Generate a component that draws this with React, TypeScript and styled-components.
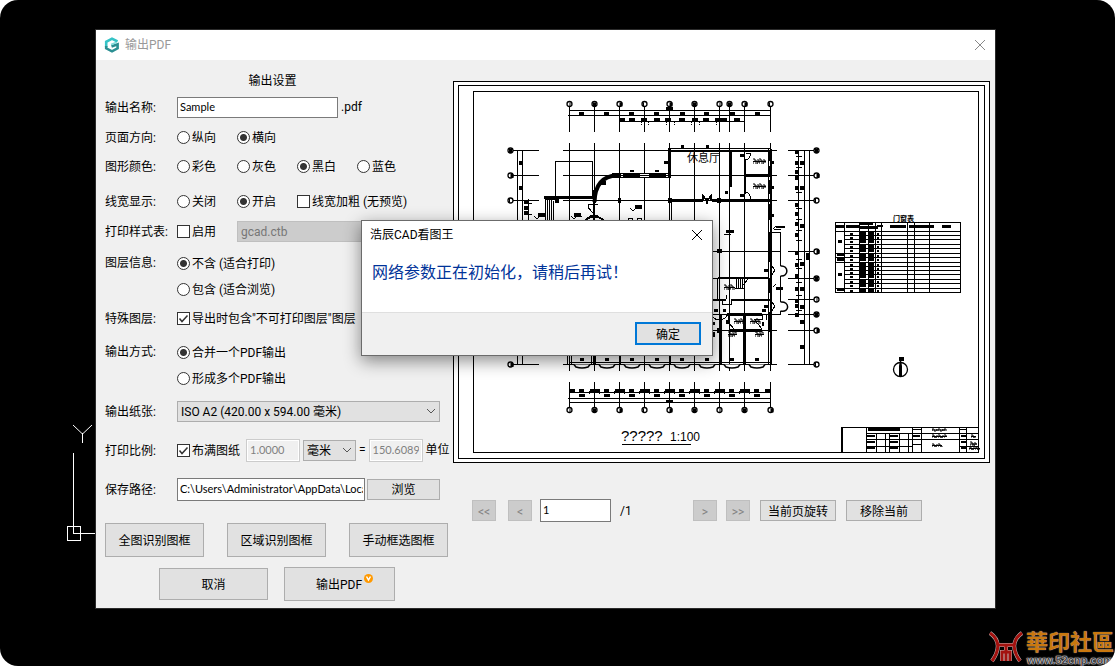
import React from "react";
import styled, { createGlobalStyle, css } from "styled-components";

const GlobalStyle = createGlobalStyle`
  * { box-sizing: border-box; }
  body {
    margin: 0;
    background: #fff;
    color: #000;
    font: 12px/16px Roboto, "Noto Sans CJK SC", sans-serif;
  }
  button, input, select { font: inherit; color: inherit; margin: 0; }
`;

const Canvas = styled.main`
  position: relative;
  min-height: 100vh;
  padding: 30px 120px 58px 96px;
  background: #000;
  border-radius: 18px;
  overflow: hidden;
`;

const UcsIcon = styled.svg`
  position: absolute;
  left: 66px;
  top: 422px;
`;

const Window = styled.section`
  position: relative;
  background: #f0f0f0;
  outline: 1px solid #2b2b2b;
`;

const TitleBar = styled.header`
  display: flex;
  align-items: center;
  gap: 5px;
  height: 30px;
  padding: 0 9px 0 8px;
  background: #fff;
  color: #999;
`;

const TitleText = styled.h1`
  flex: 1;
  margin: 0;
  font-size: 12px;
  font-weight: 400;
`;

const CloseButton = styled.button`
  display: flex;
  padding: 0;
  border: 0;
  background: none;
`;

const Body = styled.div`
  display: flex;
  align-items: flex-start;
`;

const Settings = styled.form`
  flex: none;
  width: 357px;
  padding: 8px 0 7px 9px;
`;

const SettingsTitle = styled.h2`
  margin: 0;
  height: 24px;
  line-height: 26px;
  font-size: 12px;
  font-weight: 400;
  text-align: center;
  padding-right: 13px;
`;

const Row = styled.div<{ $h: number; $top?: number }>`
  display: flex;
  align-items: center;
  min-height: ${(p) => p.$h}px;
  margin-top: ${(p) => p.$top ?? 0}px;
`;

const RowLabel = styled.span`
  flex: none;
  width: 72px;
  padding-top: 2px;
  white-space: nowrap;
`;

const Stack = styled.div`
  display: flex;
  flex-direction: column;
`;

const StackedRow = styled(Row)`
  align-items: flex-start;
  > ${RowLabel} { line-height: 26px; padding-top: 0; }
`;

const Choice = styled.label<{ $w?: number; $h?: number }>`
  display: flex;
  align-items: center;
  gap: 2px;
  line-height: 18px;
  white-space: nowrap;
  ${(p) => p.$w && css`width: ${p.$w}px;`}
  ${(p) => p.$h && css`height: ${p.$h}px;`}
`;

const ChoiceText = styled.span`
  padding-top: 1px;
`;

const Radio = styled.input.attrs({ type: "radio" })`
  appearance: none;
  flex: none;
  width: 13px;
  height: 13px;
  border: 1px solid #333;
  border-radius: 50%;
  background: #fff;
  &:checked { background: radial-gradient(circle, #333 0 3px, #fff 4px); }
`;

const CheckBox = styled.input.attrs({ type: "checkbox" })`
  appearance: none;
  width: 13px;
  height: 13px;
  border: 1px solid #333;
  background: #fff;
`;

const CheckWrap = styled.span`
  display: grid;
  width: 13px;
  height: 13px;
  > * { grid-area: 1 / 1; }
  > svg { pointer-events: none; z-index: 1; }
`;

const Field = styled.input<{ $w: number; $h?: number }>`
  width: ${(p) => p.$w}px;
  height: ${(p) => p.$h ?? 23}px;
  padding: 0 1px 2px 2px;
  border: 1px solid #7a7a7a;
  background: #fff;
  font-family: Lato, sans-serif;
  font-size: 11px;
  outline: 0;
  &:disabled {
    padding: 0 3px 2px;
    border-color: #ccc;
    box-shadow: inset 0 0 0 1px #fff;
    background: #f0f0f0;
    color: #808080;
  }
`;

const SelectWrap = styled.span<{ $w: number }>`
  display: grid;
  align-items: center;
  width: ${(p) => p.$w}px;
  > * { grid-area: 1 / 1; }
  > svg { justify-self: end; margin-right: 4px; pointer-events: none; }
`;

const Select = styled.select`
  appearance: none;
  width: 100%;
  height: 21px;
  padding: 1px 3px 0;
  border: 1px solid #adadad;
  border-radius: 0;
  background: #e1e1e1;
  &:disabled { background: #ccc; border-color: #bfbfbf; color: #777; opacity: 1; }
`;

const Button = styled.button<{ $w: number; $h?: number }>`
  display: flex;
  align-items: center;
  justify-content: center;
  width: ${(p) => p.$w}px;
  height: ${(p) => p.$h ?? 21}px;
  padding: 2px 0 0;
  border: 1px solid #adadad;
  background: #e1e1e1;
  white-space: nowrap;
  &:disabled { background: #ccc; border-color: #bfbfbf; color: #838383; }
`;

const DefaultButton = styled(Button)`
  border: 2px solid #0078d7;
`;

const FrameButtons = styled.div`
  display: flex;
  justify-content: space-between;
  margin-top: 14px;
  padding-right: 5px;
`;

const Actions = styled.div`
  display: flex;
  align-items: center;
  gap: 16px;
  margin-top: 10px;
  padding-left: 54px;
`;

const ExportButton = styled(Button)`
  padding-left: 10px;
`;

const VipBadge = styled.svg`
  align-self: flex-start;
  margin: 4px 0 0 2px;
`;

const Preview = styled.section`
  flex: 1;
  min-width: 0;
  padding: 21px 5px 0 0;
`;

const Drawing = styled.svg`
  display: block;
  width: 100%;
  height: auto;
`;

const Pager = styled.nav`
  display: flex;
  align-items: center;
  margin-top: 36px;
  padding-left: 19px;
`;

const PagerGroup = styled.div<{ $gap: number; $left?: number }>`
  display: flex;
  align-items: center;
  gap: ${(p) => p.$gap}px;
  margin-left: ${(p) => p.$left ?? 0}px;
`;

const PageTotal = styled.span`
  width: 73px;
`;

const Dialog = styled.section`
  position: absolute;
  left: 265px;
  top: 190px;
  width: 352px;
  border: 1px solid #6b6b6b;
  background: #fff;
  box-shadow: 0 5px 16px rgba(0, 0, 0, 0.45);
`;

const DialogTitle = styled.header`
  display: flex;
  align-items: center;
  justify-content: space-between;
  height: 28px;
  padding: 0 9px 0 8px;
`;

const Message = styled.p`
  margin: 0;
  height: 63px;
  padding: 12px 10px 0;
  color: #039;
  font-size: 16px;
  line-height: 24px;
`;

const DialogFooter = styled.footer`
  display: flex;
  justify-content: flex-end;
  padding: 9px 11px 10px;
  border-top: 1px solid #dfdfdf;
  background: #f0f0f0;
`;

const Watermark = styled.aside`
  position: absolute;
  right: 1px;
  bottom: 0;
  display: flex;
  align-items: flex-end;
  gap: 2px;
`;

const WatermarkText = styled.div`
  display: flex;
  flex-direction: column;
  align-items: center;
`;

const WatermarkName = styled.strong`
  color: #c9780f;
  font: 700 22px/28px "Noto Sans CJK TC", sans-serif;
  text-shadow: 0 0 1px #ccc;
`;

const WatermarkUrl = styled.span`
  color: #444;
  font: 700 11px/12px "Liberation Sans", sans-serif;
  text-shadow: 0 0 1px #fff, 0 0 1px #fff, 0 0 2px #ccc;
`;

/* ---------- floor plan ---------- */

type Rect = [number, number, number, number];

const columns = [569.5, 594.5, 619.5, 644.5, 669.5, 694.5, 719.5, 729.5, 744.5, 770.5];
const lowerColumns = columns.filter((x) => x !== 729.5);
const leftRows = [150.5, 175.5, 200.5, 364.5];
const rightRows = [150.5, 175.5, 200.5, 251.5, 278.5, 299.5, 314.5, 330.5, 364.5];
const bays = [582, 607, 632, 657, 682, 707, 732, 757];

const frames: Rect[] = [
  [453.5, 81.5, 536, 381],
  [458.5, 85.5, 526, 373],
  [473.5, 91.5, 505, 361],
];

const walls: Rect[] = [
  [669, 148, 102, 1], [669, 150, 102, 2], [668, 148, 3, 30], [729, 150, 3, 37], [744, 159, 2, 35],
  [745, 174, 25, 3], [671, 199, 32, 3], [712, 199, 60, 3], [544, 196, 50, 3],
  [612, 173, 9, 5], [623, 173, 17, 5], [649, 173, 17, 5], [612, 173, 58, 1], [612, 177, 58, 1],
  [593, 190, 3, 13], [618, 198, 3, 5], [668, 198, 4, 5], [717, 198, 4, 5],
  [768, 149, 1, 216], [771, 149, 1, 216],
  [769, 152, 3, 9], [769, 166, 3, 8], [769, 180, 3, 14], [769, 204, 3, 16], [769, 232, 3, 30], [769, 279, 3, 14], [769, 312, 3, 20],
  [718, 277, 51, 2], [717, 278, 1, 22], [713, 299, 13, 2], [732, 299, 39, 2], [727, 313, 35, 3], [730, 329, 32, 3],
  [719, 314, 3, 50], [743, 314, 3, 50], [717, 249, 5, 4], [717, 328, 5, 5], [593, 355, 3, 9], [619, 355, 2, 9], [669, 355, 2, 9],
  [569, 362, 202, 1],
];

const marks: Rect[] = [
  ...[581, 606, 631, 656, 682, 706, 732, 757].map((x): Rect => [x - 2, 112, 5, 3]),
  ...[622, 632, 644, 657, 668, 682, 695, 706, 718, 724, 737].map((x): Rect => [x - 3, 118, 6, 3]),
  ...[641, 648, 666, 674, 691, 699, 716].flatMap((x): Rect[] => [[x, 121, 1, 2], [x, 124, 1, 1]]),
  [666, 107, 7, 3],
  ...bays.flatMap((x): Rect[] => [[x - 3, 389, 5, 3], [x - 3, 394, 6, 3], [x - 2, 358, 4, 3]]),
  [569, 389, 6, 3], [765, 389, 6, 3],
  ...lowerColumns.slice(1, -1).map((x): Rect => [x - 4.5, 389, 10, 3]),
  ...lowerColumns.slice(1, -1).flatMap((x): Rect[] => [[x - 5.5, 391, 1, 3], [x + 4.5, 391, 1, 3]]),
  [666, 400, 7, 2],
  [519, 161, 4, 4], [519, 186, 4, 4], [681, 145, 3, 3], [706, 145, 3, 3],
  [664, 161, 4, 3], [630, 170, 4, 2], [655, 170, 4, 2], [740, 154, 4, 3], [740, 194, 4, 3], [725, 191, 3, 3],
  [524, 200, 5, 4], [524, 206, 5, 4], [524, 211, 5, 4], [526, 203, 6, 1], [526, 214, 6, 1],
  [538, 213, 7, 4], [574, 213, 7, 4], [635, 205, 7, 4], [555, 199, 4, 4], [601, 181, 5, 4],
  [726, 230, 8, 3], [724, 234, 7, 1], [776, 226, 9, 2], [774, 229, 7, 1], [776, 287, 7, 3],
  ...[163, 188, 226, 264, 289, 307, 322, 347].map((y): Rect => [800, y - 2, 4, 4]),
  ...[152, 163, 172, 178, 188, 205, 214, 224, 235, 253, 265, 276, 289, 301, 306, 315].map((y): Rect => [795, y - 2, 4, 4]),
  ...[157, 168, 193, 209, 220, 231, 241, 260, 269, 283, 296, 311].map((y): Rect => [796, y - 1, 6, 1]),
  [806, 253, 4, 7], [771, 161, 3, 3], [771, 186, 3, 3], [771, 214, 3, 3],
  [764, 269, 4, 3], [764, 305, 4, 3], [762, 309, 4, 3], [714, 309, 4, 3], [723, 309, 3, 3],
  [713, 322, 2, 3], [713, 332, 2, 5], [726, 320, 3, 4], [762, 322, 2, 4],
];

const scribbles: Rect[] = [
  [753, 159, 13, 5], [753, 184, 13, 5], [724, 285, 11, 5], [734, 319, 10, 5], [750, 319, 10, 5],
  [728, 332, 9, 5], [755, 332, 9, 5], [932, 429, 15, 2], [932, 435, 15, 3], [932, 444, 10, 3],
  [971, 435, 5, 3], [970, 442, 7, 4], [969, 447, 11, 3],
];

const tableRows = [235.5, 239.5, 244.5, 248.5, 253.5, 257.5, 262.5, 266.5, 270.5, 274.5, 279.5, 283.5, 288.5];
const tableCols = [844.5, 859.5, 868.5, 875.5, 881.5, 907.5, 914.5, 929.5];
const headerMarks: Rect[] = [
  [836, 225, 8, 3], [846, 225, 13, 3], [860, 223, 13, 2], [860, 226, 18, 3], [877, 225, 6, 2],
  [890, 225, 16, 3], [909, 225, 25, 3], [942, 225, 9, 3],
  [838, 240, 4, 3], [838, 273, 4, 3], [837, 254, 7, 2], [837, 258, 7, 3], [837, 289, 7, 2],
];

const fill = (list: Rect[]) =>
  list.map(([x, y, width, height], i) => <rect key={i} x={x} y={y} width={width} height={height} />);

const scribblePath = ([x, y, w, h]: Rect) => {
  let d = "";
  for (let i = 0; i < w - 1; i += 2) {
    d += `M${x + i} ${y + (i % 3)}h2v${h - 2}M${x + i} ${y + h - 1}h1`;
  }
  return d + `M${x} ${y + h / 2}h${w}`;
};

const AxisMark = ({ x, y, n }: { x: number; y: number; n: number }) => (
  <g>
    <circle cx={x} cy={y} r="2.5" fill="#fff" />
    <rect x={n % 2 ? x - 1.5 : x} y={y - 1.5} width={n % 3 ? 3 : 1} height="4" fill="#000" stroke="none" />
  </g>
);

const FloorPlan = () => (
  <Drawing viewBox="453 81 537 382" role="img" aria-label="Sample">
    <rect x="453" y="81" width="537" height="382" fill="#fff" />
    <g fill="none" stroke="#000" shapeRendering="crispEdges">
      {frames.map(([x, y, width, height], i) => (
        <rect key={i} x={x} y={y} width={width} height={height} />
      ))}
      {columns.map((x) => (
        <path key={x} d={`M${x} 106V132M${x} 143V371`} />
      ))}
      {lowerColumns.map((x) => (
        <path key={x} d={`M${x} 382V408`} />
      ))}
      {leftRows.map((y) => (
        <path key={y} d={`M512 ${y}H539M563 ${y}H777`} />
      ))}
      {rightRows.map((y) => (
        <path key={y} d={`M788 ${y}H815`} />
      ))}
      <path d="M713 251.5H780M713 278.5H771M713 314.5H780M713 330.5H777" />
      <path d="M569 110.5H771M568 115.5H771M619 121.5H745M569 392.5H771M568 398.5H771M569 402.5H771" />
      <path d="M517.5 150V364M522.5 150V364M528.5 199V222M798.5 150V316M804.5 150V364M809.5 150V364" />
      <path d="M555.5 196V161.5H592.5V196" />
      <path d="M545.5 199V225M547.5 199V225M549.5 200V225M551.5 200V225M553.5 201V225M545 199.5H557" />
      <path d="M671.5 201V225M567.5 355V364M571.5 355V364M591.5 355V364" />
      <path d="M771 232.5H780.5V266M780.5 276V302M771 314H780.5V311M771 265l4 5l-4 6M771 301l4 5l-4 6" />
      <path d="M736.5 279V289M738.5 279V289M740.5 279V289M742.5 279V289M735 288.5H744M743 285L748 279" />
      <path d="M722.5 299V304H731.5V299M726.5 295V299M728 315v7l6 7M762 315v4l-8 0l8 10" />
      <path d="M713 317c3 4 12 4 14 -2M766.5 315V320" />
      <path d="M703 200V196L707 201L711 196V200M707 198V204" strokeWidth="2" />
      <path d="M745.5 153H750C751 157 748 160 745 160M745 193C749 192 751 195 750 199" />
      <path d="M534 216l3 3l3 -3h5M571 216l3 3l3 -3h5M630 208l3 3l3 -3h6M773 229l3 -3M773 287l3 -3" />
      <path d="M628.5 224V218H632.5V224M637.5 224V218H641.5V224M588.5 204.5H598M588.5 204V208L593 213" />
      <path d="M585 222C587 215 601 215 604 222M593.5 203V222M590 216H598" strokeWidth="2" />
    </g>
    <g shapeRendering="crispEdges">
      {fill(walls)}
      {fill(marks)}
    </g>
    <path d="M594.5 202C595 185 602 176 617 175.5" fill="none" stroke="#000" strokeWidth="4" />
    <path d="M621 175.5H623M640 175.5H649" stroke="#fff" strokeWidth="3" />
    <path d="M621 175.5H623M640 175.5H649" stroke="#000" />
    <g fill="#fff" stroke="#000" strokeWidth="1.3">
      {columns.map((x, i) => (
        <AxisMark key={x} x={x} y={104} n={i} />
      ))}
      {lowerColumns.map((x, i) => (
        <AxisMark key={x} x={x} y={410} n={i} />
      ))}
      {leftRows.map((y, i) => (
        <AxisMark key={y} x={510.5} y={y} n={i + 1} />
      ))}
      {rightRows.map((y, i) => (
        <AxisMark key={y} x={816.5} y={y} n={i + 1} />
      ))}
      {bays.map((x) => (
        <path key={x} d={`M${x - 8} 364.5l2 2.5q6 2 12 0l2 -2.5`} strokeWidth="1.5" />
      ))}
      <path d="M780.5 266C789 265 789 277 780.5 276M780.5 302C790 301 790 313 780.5 311" strokeWidth="1.5" />
    </g>
    <path d={scribbles.map(scribblePath).join("")} fill="none" stroke="#000" />
    <g fill="#000" fontFamily="'Noto Sans CJK SC', sans-serif">
      <text x="687" y="162" fontSize="11">休息厅</text>
      <text x="893" y="221" fontSize="7" fontWeight="700">门窗表</text>
    </g>
    <g fontFamily="'Liberation Sans', sans-serif">
      <text x="621" y="441" fontSize="15">?????</text>
      <text x="670" y="441" fontSize="12">1:100</text>
    </g>
    <path d="M622 444.5H691" stroke="#000" />

    <g fill="none" stroke="#000" shapeRendering="crispEdges">
      <rect x="835.5" y="222.5" width="125" height="70" />
      <path d="M835 231.5H960" />
      {tableRows.map((y, i) => (
        <path key={y} d={`M${[4, 5, 6, 12].includes(i) ? 835 : 844} ${y}H960`} />
      ))}
      {tableCols.map((x) => (
        <path key={x} d={`M${x} 222V292`} />
      ))}
    </g>
    <g shapeRendering="crispEdges">
      {fill(headerMarks)}
      {[231.5, ...tableRows].map((y) => (
        <g key={y}>{fill([[850, y + 1.5, 3, 2], [860, y + 0.5, 6, 3], [869, y + 0.5, 5, 3], [877, y + 1.5, 2, 2]])}</g>
      ))}
    </g>

    <circle cx="900.5" cy="369.5" r="7" fill="none" stroke="#000" strokeWidth="1.3" />
    <path d="M899 376V366L900 360H901L902 366V376Z" />
    <rect x="899" y="357" width="5" height="4" />

    <g fill="none" stroke="#000" shapeRendering="crispEdges">
      <path d="M978 427.5H841V452" strokeWidth="1" />
      <path d="M841.5 427V452" strokeWidth="2" />
      <path d="M866.5 427V452M876.5 433V452M885.5 433V452M889.5 433V452M899.5 433V452M908.5 433V452M912.5 427V452M921.5 427V452M959.5 427V452M966.5 427V452" />
      <path d="M866 433.5H978M866 439.5H978M866 446.5H912M912 429.5H921M912 444.5H921M959 429.5H966M959 446.5H978" />
    </g>
    <g shapeRendering="crispEdges">
      {fill([
        [868, 428, 32, 3], [867, 435, 8, 2], [867, 441, 8, 2], [867, 447, 8, 2], [889, 435, 9, 2], [889, 441, 9, 2],
        [889, 447, 9, 2], [913, 435, 7, 2], [961, 435, 5, 2], [961, 441, 5, 2], [961, 447, 5, 2],
      ])}
    </g>
  </Drawing>
);

/* ---------- small parts ---------- */

const Chevron = () => (
  <svg width="10" height="6" viewBox="0 0 10 6" fill="none" stroke="#555">
    <path d="M1 1l4 4l4 -4" />
  </svg>
);

const Cross = ({ color }: { color: string }) => (
  <svg width="12" height="12" viewBox="0 0 12 12" fill="none" stroke={color}>
    <path d="M1 1L11 11M11 1L1 11" />
  </svg>
);

const Check = ({ label, checked, w }: { label: string; checked?: boolean; w?: number }) => (
  <Choice $w={w}>
    <CheckWrap>
      <CheckBox defaultChecked={checked} />
      {checked && (
        <svg width="13" height="13" viewBox="0 0 13 13" fill="none" stroke="#333" strokeWidth="1.5">
          <path d="M2.5 6.5L5 9.5L10.5 3.5" />
        </svg>
      )}
    </CheckWrap>
    <ChoiceText>{label}</ChoiceText>
  </Choice>
);

const Radios = ({ name, items, selected, h, w }: { name: string; items: string[]; selected: number; h?: number; w?: number }) => (
  <>
    {items.map((item, i) => (
      <Choice key={item} $w={w} $h={h}>
        <Radio name={name} defaultChecked={i === selected} />
        <ChoiceText>{item}</ChoiceText>
      </Choice>
    ))}
  </>
);

const AppLogo = () => (
  <svg width="16" height="16" viewBox="0 0 16 16" fill="none" strokeWidth="2.6">
    <path d="M13.5 4.5L8 1.7L2.2 4.8V10" stroke="#35c3c6" />
    <path d="M2.2 9V11.3L8 14.3L13.6 11.3V7.3L7.5 9.5" stroke="#2b8f92" />
    <path d="M7 7.5L12 5.5" stroke="#7fdcdc" strokeWidth="1.5" />
  </svg>
);

export default function App() {
  return (
    <>
      <GlobalStyle />
      <Canvas>
        <UcsIcon width="31" height="122" viewBox="0 0 31 122" fill="none" stroke="#fff" shapeRendering="crispEdges">
          <path d="M7.5 31V111.5H31M1.5 104.5H14.5V118.5H1.5Z" />
          <path d="M7 3L16.5 12L26 3M16.5 11V21" shapeRendering="auto" />
        </UcsIcon>

        <Window>
          <TitleBar>
            <AppLogo />
            <TitleText>输出PDF</TitleText>
            <CloseButton aria-label="关闭">
              <Cross color="#888" />
            </CloseButton>
          </TitleBar>

          <Body>
            <Settings onSubmit={(e) => e.preventDefault()}>
              <SettingsTitle>输出设置</SettingsTitle>
              <Row $h={30}>
                <RowLabel as="label" htmlFor="name">输出名称:</RowLabel>
                <Field id="name" $w={161} $h={21} defaultValue="Sample" />
                <PagerGroup $gap={0} $left={3}>.pdf</PagerGroup>
              </Row>
              <Row $h={30}>
                <RowLabel>页面方向:</RowLabel>
                <Radios name="direction" items={["纵向", "横向"]} selected={1} w={60} />
              </Row>
              <Row $h={28}>
                <RowLabel>图形颜色:</RowLabel>
                <Radios name="color" items={["彩色", "灰色", "黑白", "蓝色"]} selected={2} w={60} />
              </Row>
              <Row $h={30} $top={6}>
                <RowLabel>线宽显示:</RowLabel>
                <Radios name="lineweight" items={["关闭", "开启"]} selected={1} w={60} />
                <Check label="线宽加粗 (无预览)" />
              </Row>
              <Row $h={30}>
                <RowLabel>打印样式表:</RowLabel>
                <Check label="启用" w={60} />
                <SelectWrap $w={203}>
                  <Select disabled aria-label="打印样式表">
                    <option>gcad.ctb</option>
                  </Select>
                  <Chevron />
                </SelectWrap>
              </Row>
              <StackedRow $h={52} $top={4}>
                <RowLabel>图层信息:</RowLabel>
                <Stack>
                  <Radios name="layers" items={["不含 (适合打印)", "包含 (适合浏览)"]} selected={0} h={26} />
                </Stack>
              </StackedRow>
              <Row $h={32}>
                <RowLabel>特殊图层:</RowLabel>
                <Check label={'导出时包含"不可打印图层"图层'} checked />
              </Row>
              <StackedRow $h={52} $top={5}>
                <RowLabel>输出方式:</RowLabel>
                <Stack>
                  <Radios name="mode" items={["合并一个PDF输出", "形成多个PDF输出"]} selected={0} h={26} />
                </Stack>
              </StackedRow>
              <Row $h={40}>
                <RowLabel as="label" htmlFor="paper">输出纸张:</RowLabel>
                <SelectWrap $w={263}>
                  <Select id="paper">
                    <option>ISO A2 (420.00 x 594.00 毫米)</option>
                  </Select>
                  <Chevron />
                </SelectWrap>
              </Row>
              <Row $h={38}>
                <RowLabel>打印比例:</RowLabel>
                <Check label="布满图纸" checked w={69} />
                <Field $w={54} disabled defaultValue="1.0000" aria-label="图纸" />
                <PagerGroup $gap={3} $left={3}>
                  <SelectWrap $w={53}>
                    <Select aria-label="毫米">
                      <option>毫米</option>
                    </Select>
                    <Chevron />
                  </SelectWrap>
                  =
                  <Field id="units" $w={54} disabled defaultValue="150.6089" />
                  <label htmlFor="units">单位</label>
                </PagerGroup>
              </Row>
              <Row $h={40}>
                <RowLabel as="label" htmlFor="path">保存路径:</RowLabel>
                <Field id="path" $w={188} defaultValue="C:\Users\Administrator\AppData\Loca" />
                <PagerGroup $gap={0} $left={2}>
                  <Button $w={73}>浏览</Button>
                </PagerGroup>
              </Row>
              <FrameButtons>
                <Button $w={99} $h={34}>全图识别图框</Button>
                <Button $w={99} $h={34}>区域识别图框</Button>
                <Button $w={99} $h={34}>手动框选图框</Button>
              </FrameButtons>
              <Actions>
                <Button $w={109} $h={32}>取消</Button>
                <ExportButton $w={111} $h={34}>
                  输出PDF
                  <VipBadge width="9" height="9" viewBox="0 0 9 9" fill="none">
                    <circle cx="4.5" cy="4.5" r="4.5" fill="#f90" />
                    <path d="M2.5 2.5L4.5 6L6.5 2.5" stroke="#fff" strokeWidth="1.5" />
                  </VipBadge>
                </ExportButton>
              </Actions>
            </Settings>

            <Preview>
              <FloorPlan />
              <Pager>
                <PagerGroup $gap={12}>
                  <Button $w={24} disabled>&lt;&lt;</Button>
                  <Button $w={24} disabled>&lt;</Button>
                </PagerGroup>
                <PagerGroup $gap={9} $left={8}>
                  <Field $w={71} defaultValue="1" aria-label="页" />
                  <PageTotal>/1</PageTotal>
                </PagerGroup>
                <PagerGroup $gap={9}>
                  <Button $w={24} disabled>&gt;</Button>
                  <Button $w={24} disabled>&gt;&gt;</Button>
                </PagerGroup>
                <PagerGroup $gap={10} $left={10}>
                  <Button $w={76}>当前页旋转</Button>
                  <Button $w={76}>移除当前</Button>
                </PagerGroup>
              </Pager>
            </Preview>
          </Body>

          <Dialog role="dialog" aria-labelledby="dialog-title">
            <DialogTitle>
              <span id="dialog-title">浩辰CAD看图王</span>
              <CloseButton aria-label="关闭">
                <Cross color="#000" />
              </CloseButton>
            </DialogTitle>
            <Message>网络参数正在初始化，请稍后再试！</Message>
            <DialogFooter>
              <DefaultButton $w={66} $h={23}>确定</DefaultButton>
            </DialogFooter>
          </Dialog>
        </Window>

        <Watermark>
          <svg width="36" height="36" viewBox="0 0 36 36" fill="none">
            <path d="M2 3C12 10 12 20 4 31M34 3C24 10 24 20 32 31M9 15H27M14 31V22H22V31M18 16V31" stroke="#bbb" strokeWidth="4" />
            <path d="M2 3C12 10 12 20 4 31M34 3C24 10 24 20 32 31M9 15H27M14 31V22H22V31M18 16V31" stroke="#a3120f" strokeWidth="3" />
          </svg>
          <WatermarkText>
            <WatermarkName>華印社區</WatermarkName>
            <WatermarkUrl>www.52cnp.com</WatermarkUrl>
          </WatermarkText>
        </Watermark>
      </Canvas>
    </>
  );
}
